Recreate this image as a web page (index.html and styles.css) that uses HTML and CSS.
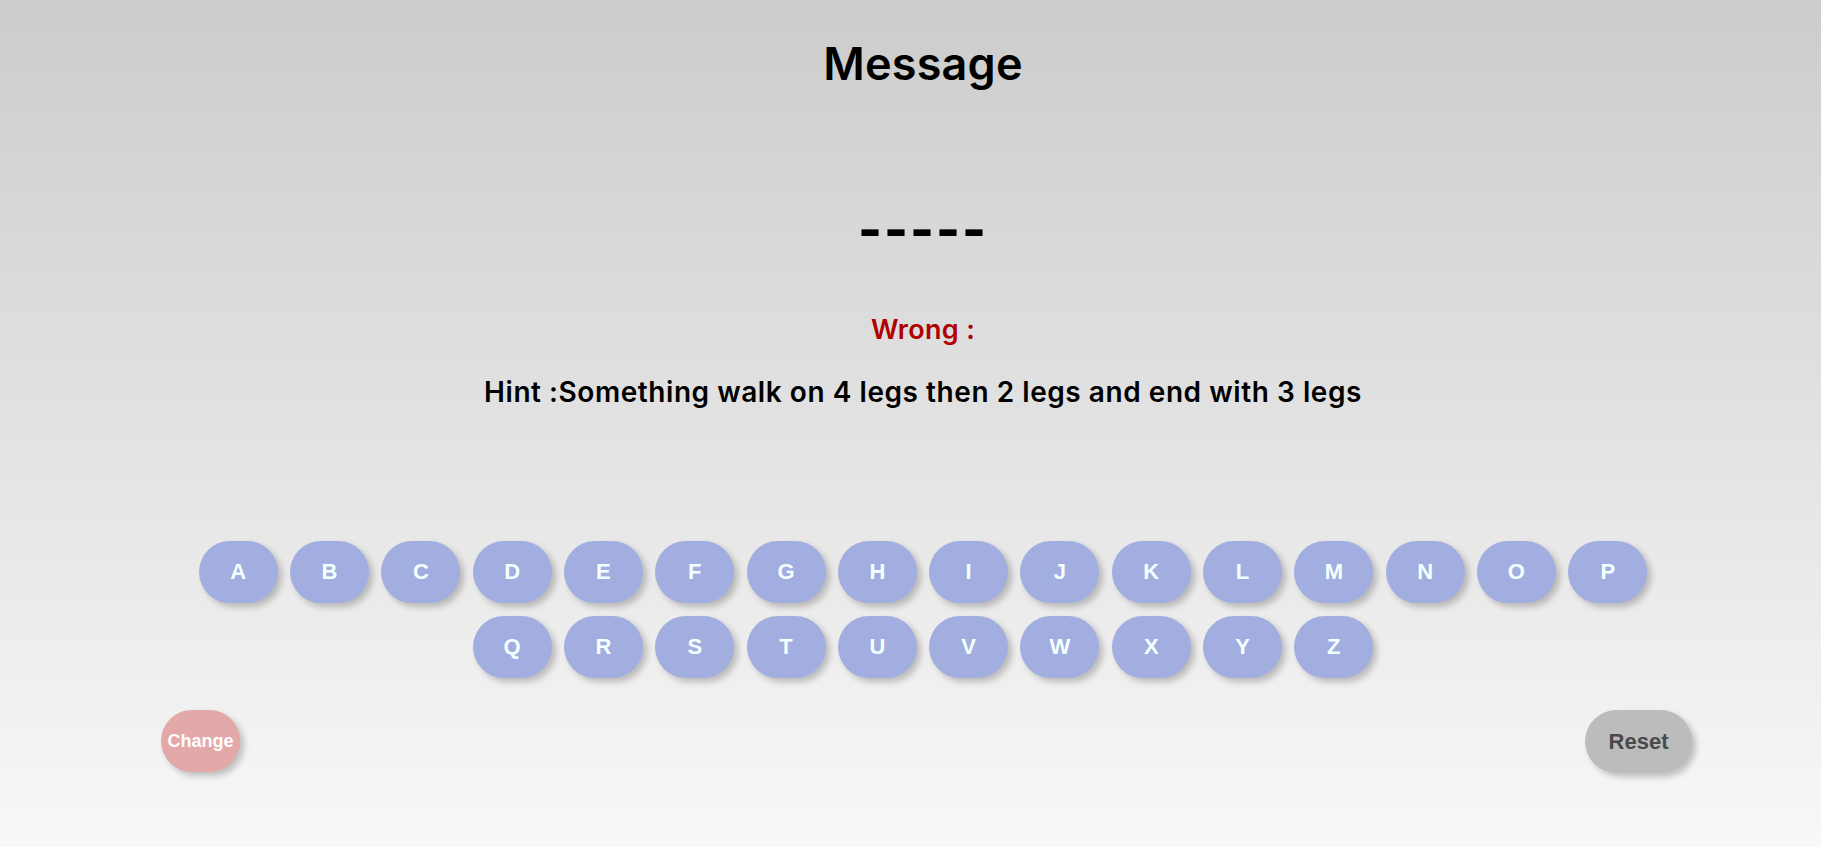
FILE: index.html
```html
<!DOCTYPE html>
<html lang="en">
<head>
<meta charset="utf-8">
<title>Message</title>
<link rel="stylesheet" href="styles.css">
</head>
<body>
<main class="game">
  <h1 class="title">Message</h1>
  <div class="word">-----</div>
  <p class="wrong">Wrong :</p>
  <p class="hint">Hint :Something walk on 4 legs then 2 legs and end with 3 legs</p>
  <div class="keyboard">
    <div class="row">
      <button class="key">A</button><button class="key">B</button><button class="key">C</button><button class="key">D</button><button class="key">E</button><button class="key">F</button><button class="key">G</button><button class="key">H</button><button class="key">I</button><button class="key">J</button><button class="key">K</button><button class="key">L</button><button class="key">M</button><button class="key">N</button><button class="key">O</button><button class="key">P</button>
    </div>
    <div class="row">
      <button class="key">Q</button><button class="key">R</button><button class="key">S</button><button class="key">T</button><button class="key">U</button><button class="key">V</button><button class="key">W</button><button class="key">X</button><button class="key">Y</button><button class="key">Z</button>
    </div>
  </div>
  <div class="controls">
    <button class="change">Change</button>
    <button class="reset">Reset</button>
  </div>
</main>
</body>
</html>
```
FILE: styles.css
```css
html, body {
  margin: 0;
  padding: 0;
  height: 100%;
}
body {
  background: linear-gradient(to bottom, #cccccc 0%, #f8f8f8 100%);
  font-family: Inter, "Noto Sans", sans-serif;
  color: #000;
}
.game {
  display: flex;
  flex-direction: column;
  align-items: center;
  padding-left: 25px;
  min-height: 847px;
  box-sizing: border-box;
}
.title {
  margin: 37px 0 0;
  height: 54px;
  font-size: 45px;
  line-height: 54px;
  font-weight: 600;
  letter-spacing: 0.2px;
}
.word {
  margin-top: 109px;
  height: 60px;
  font-size: 51px;
  line-height: 60px;
  font-weight: 800;
  letter-spacing: 2px;
}
.wrong {
  margin: 50px 0 0;
  height: 40px;
  font-size: 27px;
  line-height: 40px;
  font-weight: 600;
  color: #b00000;
  letter-spacing: 0.3px;
}
.hint {
  margin: 22px 0 0;
  height: 40px;
  font-size: 28px;
  line-height: 40px;
  font-weight: 600;
  letter-spacing: 0.55px;
}
.keyboard {
  margin-top: 129px;
  display: flex;
  flex-direction: column;
  gap: 13px;
  align-items: center;
}
.row {
  display: flex;
  gap: 12.3px;
  justify-content: center;
}
button {
  border: none;
  padding: 0;
  cursor: pointer;
  font-family: "Liberation Sans", Arial, sans-serif;
  font-weight: bold;
  box-shadow: 4px 4px 6px rgba(0, 0, 0, 0.22);
}
.key {
  width: 79px;
  height: 62px;
  border-radius: 31px;
  background: #a2aee0;
  color: #f4ffff;
  font-size: 22px;
}
.controls {
  margin-top: 32px;
  align-self: stretch;
  display: flex;
  justify-content: space-between;
  padding: 0 129px 0 136px;
}
.change {
  width: 79px;
  height: 62px;
  border-radius: 31px;
  background: #e3a8a8;
  color: #fff;
  font-size: 18px;
}
.reset {
  width: 107px;
  height: 63px;
  border-radius: 32px;
  background: #bcbcbc;
  color: #4a4a4a;
  font-size: 22px;
}
```
